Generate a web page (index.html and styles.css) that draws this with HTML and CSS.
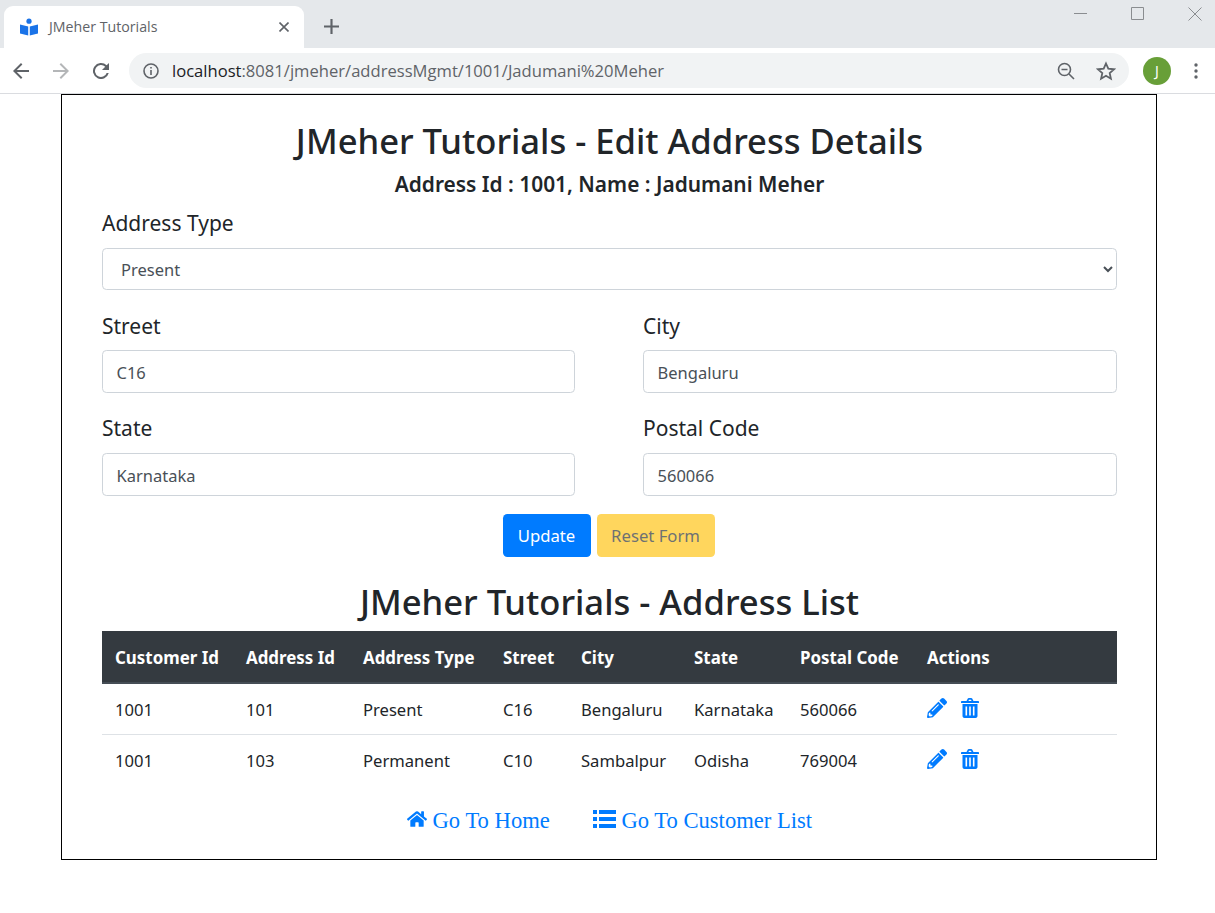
FILE: index.html
```html
<!DOCTYPE html>
<html lang="en">
<head>
    <meta charset="UTF-8">
    <title>JMeher Tutorials</title>
    <link rel="stylesheet" href="styles.css">
</head>
<body>
<div class="tabstrip">
    <div class="tab">
        <svg class="favicon" viewBox="0 0 18 18"><circle cx="9" cy="3.2" r="2.6" fill="#1a73e8"/><path d="M0 6.5l8.2 2v9L0 15.5zM18 6.5l-8.2 2v9l8.2-2z" fill="#1a73e8"/></svg>
        <span class="tab-title">JMeher Tutorials</span>
        <svg class="tab-close" viewBox="0 0 10 10"><path d="M0.5 0.5l9 9M9.5 0.5l-9 9" stroke="#5f6368" stroke-width="1.6"/></svg>
    </div>
    <svg class="new-tab" viewBox="0 0 14 14"><path d="M7 0v14M0 7h14" stroke="#5f6368" stroke-width="2"/></svg>
    <div class="window-btns">
        <svg viewBox="0 0 14 14"><path d="M0 6.5h13" stroke="#8a8d90"/></svg>
        <svg viewBox="0 0 14 14"><path d="M.5.5h12v12H.5z" fill="none" stroke="#8a8d90"/></svg>
        <svg viewBox="0 0 14 14"><path d="M.5.5l13 13M13.5.5l-13 13" stroke="#8a8d90"/></svg>
    </div>
</div>
<div class="toolbar">
    <svg class="tool" viewBox="0 0 16 16"><path d="M16 7H3.8l5.6-5.6L8 0 0 8l8 8 1.4-1.4L3.8 9H16z" fill="#5f6368"/></svg>
    <svg class="tool" viewBox="0 0 16 16"><path d="M0 7h12.2L6.6 1.4 8 0l8 8-8 8-1.4-1.4L12.2 9H0z" fill="#b4b6b8"/></svg>
    <svg class="tool" viewBox="0 0 16 16"><path d="M13.65 2.35A8 8 0 1 0 15.74 10h-2.08a6 6 0 1 1-1.42-6.24L9 7h7V0z" fill="#5f6368"/></svg>
    <div class="omnibox">
        <svg class="info" viewBox="0 0 16 16"><circle cx="8" cy="8" r="7" fill="none" stroke="#5f6368" stroke-width="1.6"/><path d="M7.2 7h1.6v5H7.2zM7.2 4h1.6v1.6H7.2z" fill="#5f6368"/></svg>
        <span class="url"><span class="url-host">localhost</span>:8081/jmeher/addressMgmt/1001/Jadumani%20Meher</span>
        <svg class="zoom-icon" viewBox="0 0 18 18"><circle cx="7.5" cy="7.5" r="6" fill="none" stroke="#5f6368" stroke-width="1.6"/><path d="M4.5 7.5h6M12 12l5 5" stroke="#5f6368" stroke-width="1.6"/></svg>
        <svg class="star" viewBox="0 0 20 20"><path d="M10 2.5l2.3 5.2 5.7.6-4.3 3.8 1.2 5.6L10 14.8l-4.9 2.9 1.2-5.6L2 8.3l5.7-.6z" fill="none" stroke="#5f6368" stroke-width="1.8"/></svg>
    </div>
    <div class="avatar">J</div>
    <svg class="menu" viewBox="0 0 4 16"><circle cx="2" cy="2" r="1.7"/><circle cx="2" cy="8" r="1.7"/><circle cx="2" cy="14" r="1.7"/></svg>
</div>

<main class="page">
    <h1 class="title">JMeher Tutorials - Edit Address Details</h1>
    <h2 class="subtitle">Address Id : 1001, Name : Jadumani Meher</h2>
    <form>
        <div class="field">
            <label for="type">Address Type</label>
            <select id="type" class="control select"><option>Present</option><option>Permanent</option></select>
        </div>
        <div class="form-row">
            <div class="field">
                <label for="street">Street</label>
                <input id="street" class="control" value="C16">
            </div>
            <div class="field">
                <label for="city">City</label>
                <input id="city" class="control" value="Bengaluru">
            </div>
            <div class="field">
                <label for="state">State</label>
                <input id="state" class="control" value="Karnataka">
            </div>
            <div class="field">
                <label for="postal">Postal Code</label>
                <input id="postal" class="control" value="560066">
            </div>
        </div>
        <div class="buttons">
            <button type="button" class="btn btn-primary">Update</button>
            <button type="button" class="btn btn-warning">Reset Form</button>
        </div>
    </form>

    <h1 class="title list-title">JMeher Tutorials - Address List</h1>
    <table class="address-table">
        <colgroup>
            <col class="c1"><col class="c2"><col class="c3"><col class="c4"><col class="c5"><col class="c6"><col class="c7"><col>
        </colgroup>
        <thead>
            <tr><th>Customer Id</th><th>Address Id</th><th>Address Type</th><th>Street</th><th>City</th><th>State</th><th>Postal Code</th><th>Actions</th></tr>
        </thead>
        <tbody>
            <tr>
                <td>1001</td><td>101</td><td>Present</td><td>C16</td><td>Bengaluru</td><td>Karnataka</td><td>560066</td>
                <td class="actions">
                    <svg class="pencil" viewBox="0 0 512 512"><path d="M497.9 142.1l-46.1 46.1c-4.7 4.7-12.3 4.7-17 0l-111-111c-4.7-4.7-4.7-12.3 0-17l46.1-46.1c18.7-18.7 49.1-18.7 67.9 0l60.1 60.1c18.8 18.7 18.8 49.1 0 67.9zM284.2 99.8L21.6 362.4.4 483.9c-2.9 16.4 11.4 30.6 27.8 27.8l121.5-21.3 262.6-262.6c4.7-4.7 4.7-12.3 0-17l-111-111c-4.8-4.7-12.4-4.7-17.1 0zM124.1 339.9c-5.5-5.5-5.5-14.3 0-19.8l154-154c5.5-5.5 14.3-5.5 19.8 0s5.5 14.3 0 19.8l-154 154c-5.5 5.5-14.3 5.5-19.8 0zM88 424h48v36.3l-64.5 11.3-31.1-31.1L51.7 376H88v48z"/></svg>
                    <svg class="trash" viewBox="0 0 18 20"><path fill-rule="evenodd" d="M5.5 3L6.8.6C7 .2 7.4 0 7.8 0h2.4c.4 0 .8.2 1 .6L12.5 3H17c.6 0 1 .4 1 1v1H0V4c0-.6.4-1 1-1zM7.4 3h3.2l-.7-1.3H8.1zM1.5 6h15v12c0 1.1-.9 2-2 2h-11c-1.1 0-2-.9-2-2zM4.5 8.5v9h1.6v-9zM8.2 8.5v9h1.6v-9zM11.9 8.5v9h1.6v-9z"/></svg>
                </td>
            </tr>
            <tr>
                <td>1001</td><td>103</td><td>Permanent</td><td>C10</td><td>Sambalpur</td><td>Odisha</td><td>769004</td>
                <td class="actions">
                    <svg class="pencil" viewBox="0 0 512 512"><path d="M497.9 142.1l-46.1 46.1c-4.7 4.7-12.3 4.7-17 0l-111-111c-4.7-4.7-4.7-12.3 0-17l46.1-46.1c18.7-18.7 49.1-18.7 67.9 0l60.1 60.1c18.8 18.7 18.8 49.1 0 67.9zM284.2 99.8L21.6 362.4.4 483.9c-2.9 16.4 11.4 30.6 27.8 27.8l121.5-21.3 262.6-262.6c4.7-4.7 4.7-12.3 0-17l-111-111c-4.8-4.7-12.4-4.7-17.1 0zM124.1 339.9c-5.5-5.5-5.5-14.3 0-19.8l154-154c5.5-5.5 14.3-5.5 19.8 0s5.5 14.3 0 19.8l-154 154c-5.5 5.5-14.3 5.5-19.8 0zM88 424h48v36.3l-64.5 11.3-31.1-31.1L51.7 376H88v48z"/></svg>
                    <svg class="trash" viewBox="0 0 18 20"><path fill-rule="evenodd" d="M5.5 3L6.8.6C7 .2 7.4 0 7.8 0h2.4c.4 0 .8.2 1 .6L12.5 3H17c.6 0 1 .4 1 1v1H0V4c0-.6.4-1 1-1zM7.4 3h3.2l-.7-1.3H8.1zM1.5 6h15v12c0 1.1-.9 2-2 2h-11c-1.1 0-2-.9-2-2zM4.5 8.5v9h1.6v-9zM8.2 8.5v9h1.6v-9zM11.9 8.5v9h1.6v-9z"/></svg>
                </td>
            </tr>
        </tbody>
    </table>
    <div class="links">
        <a href="#"><svg class="home" viewBox="0 0 576 512"><path d="M280.37 148.26L96 300.11V464a16 16 0 0 0 16 16l112.06-.29a16 16 0 0 0 15.92-16V368a16 16 0 0 1 16-16h64a16 16 0 0 1 16 16v95.64a16 16 0 0 0 16 16.05L464 480a16 16 0 0 0 16-16V300L295.67 148.26a12.19 12.19 0 0 0-15.3 0zM571.6 251.47L488 182.56V44.05a12 12 0 0 0-12-12h-56a12 12 0 0 0-12 12v72.61L318.47 43a48 48 0 0 0-61 0L4.34 251.47a12 12 0 0 0-1.6 16.9l25.5 31A12 12 0 0 0 45.15 301l235.22-193.74a12.19 12.19 0 0 1 15.3 0L530.9 301a12 12 0 0 0 16.9-1.6l25.5-31a12 12 0 0 0-1.7-16.93z"/></svg> Go To Home</a>
        <a href="#"><svg class="list" viewBox="0 0 23 18"><path d="M0 0h4v4H0zM6 0h17v4H6zM0 7h4v4H0zM6 7h17v4H6zM0 14h4v4H0zM6 14h17v4H6z"/></svg> Go To Customer List</a>
    </div>
</main>
</body>
</html>
```

FILE: styles.css
```css
* {
    box-sizing: border-box;
}

body {
    margin: 0;
    background: #fff;
    color: #212529;
    font-family: "Noto Sans", Arial, sans-serif;
    font-size: 16.6px;
}

/* browser chrome */
.tabstrip {
    display: flex;
    align-items: flex-end;
    height: 48px;
    background: #e5e8eb;
    position: relative;
}

.tab {
    display: flex;
    align-items: center;
    width: 300px;
    height: 42px;
    margin-left: 4px;
    padding: 0 15px 0 16px;
    background: #fff;
    border-radius: 9px 9px 0 0;
}

.favicon {
    width: 18px;
    height: 18px;
    margin-right: 11px;
}

.tab-title {
    flex: 1;
    margin-bottom: 2px;
    font-family: "Open Sans", sans-serif;
    font-size: 14.2px;
    color: #5f6368;
}

.tab-close {
    width: 10px;
    height: 10px;
}

.new-tab {
    width: 15px;
    height: 15px;
    margin: 0 0 14px 20px;
}

.window-btns {
    position: absolute;
    top: 7px;
    right: 13px;
    display: flex;
    gap: 43px;
}

.window-btns svg {
    width: 14px;
    height: 14px;
}

.toolbar {
    display: flex;
    align-items: center;
    height: 46px;
    padding: 0 12px 0 13px;
    background: #fff;
    border-bottom: 1px solid #dadce0;
}

.tool {
    width: 16px;
    height: 16px;
    margin-right: 24px;
}

.omnibox {
    display: flex;
    align-items: center;
    width: 1000px;
    height: 35px;
    margin-left: -4px;
    padding: 0 13px 0 14px;
    background: #f1f3f4;
    border-radius: 18px;
}

.info {
    width: 16px;
    height: 16px;
    margin-right: 13px;
}

.url {
    flex: 1;
    font-family: "Open Sans", sans-serif;
    font-size: 16.6px;
    color: #5f6368;
}

.url-host {
    color: #202124;
}

.zoom-icon {
    width: 18px;
    height: 18px;
    margin-right: 21px;
}

.star {
    width: 20px;
    height: 20px;
}

.avatar {
    width: 28px;
    height: 28px;
    margin-left: 14px;
    border-radius: 50%;
    background: #689f38;
    color: #fff;
    font-size: 14px;
    line-height: 28px;
    text-align: center;
}

.menu {
    width: 4px;
    height: 16px;
    margin-left: 23px;
    fill: #5f6368;
}

/* page */
.page {
    width: 1096px;
    height: 766px;
    margin-left: 61px;
    padding: 0 39px 0 40px;
    border: 1px solid #000;
}

.title {
    margin: 0;
    font-size: 34.6px;
    font-weight: 500;
    line-height: 42px;
    text-align: center;
}

.page > .title:first-child {
    margin-top: 25px;
}

.subtitle {
    margin: 10px 0 0;
    font-size: 20.9px;
    font-weight: 600;
    line-height: 25px;
    text-align: center;
}

.field label {
    display: block;
    margin-bottom: 9px;
    font-size: 21px;
    line-height: 30px;
}

form > .field {
    margin-top: 11px;
}

form > .field label,
.form-row .field:nth-child(n+3) label {
    margin-bottom: 10px;
}

.control {
    display: block;
    width: 100%;
    height: 43px;
    padding: 2px 14px 0 13.5px;
    border: 1px solid #ced4da;
    border-radius: 4.4px;
    background: #fff;
    color: #495057;
    font-family: inherit;
    font-size: 16.5px;
}

.select {
    height: 42px;
    padding: 0 14px;
}

.form-row {
    display: grid;
    grid-template-columns: 473px 474px;
    justify-content: space-between;
    row-gap: 20px;
    margin-top: 21px;
}

.buttons {
    display: flex;
    justify-content: center;
    gap: 6px;
    margin-top: 18px;
    padding-right: 2px;
}

.btn {
    height: 43px;
    border: 0;
    border-radius: 4.4px;
    font-family: inherit;
    font-size: 16.7px;
}

.btn-primary {
    width: 88px;
    background: #007bff;
    color: #fff;
}

.btn-warning {
    width: 118px;
    background: #ffc107;
    color: #212529;
    opacity: .65;
}

.list-title {
    margin-top: 24px;
}

.address-table {
    width: 100%;
    margin-top: 8px;
    border-collapse: separate;
    border-spacing: 0;
    table-layout: fixed;
}

.c1 { width: 131px; }
.c2 { width: 117px; }
.c3 { width: 140px; }
.c4 { width: 78px; }
.c5 { width: 113px; }
.c6 { width: 106px; }
.c7 { width: 127px; }

.address-table th {
    height: 53px;
    padding: 1px 0 0 13px;
    background: #343a40;
    color: #fff;
    font-size: 16.9px;
    font-weight: 700;
    text-align: left;
    border-bottom: 2px solid #454d55;
    white-space: nowrap;
}

.address-table td {
    height: 51px;
    padding: 0 0 0 13px;
    border-bottom: 1px solid #dee2e6;
    white-space: nowrap;
}

.address-table tbody tr:last-child td {
    border-bottom: 0;
}

.actions svg {
    margin-bottom: 4px;
    fill: #007bff;
    vertical-align: middle;
}

.pencil {
    width: 20px;
    height: 20px;
    margin-right: 10px;
}

.trash {
    width: 18px;
    height: 20px;
}

.links {
    display: flex;
    justify-content: center;
    gap: 43px;
    margin-top: 22px;
    font-family: "Liberation Serif", serif;
    font-size: 22.6px;
}

.links a {
    color: #007bff;
    text-decoration: none;
}

.home {
    width: 20px;
    height: 18px;
    fill: #007bff;
}

.list {
    width: 23px;
    height: 18px;
    fill: #007bff;
}
```
